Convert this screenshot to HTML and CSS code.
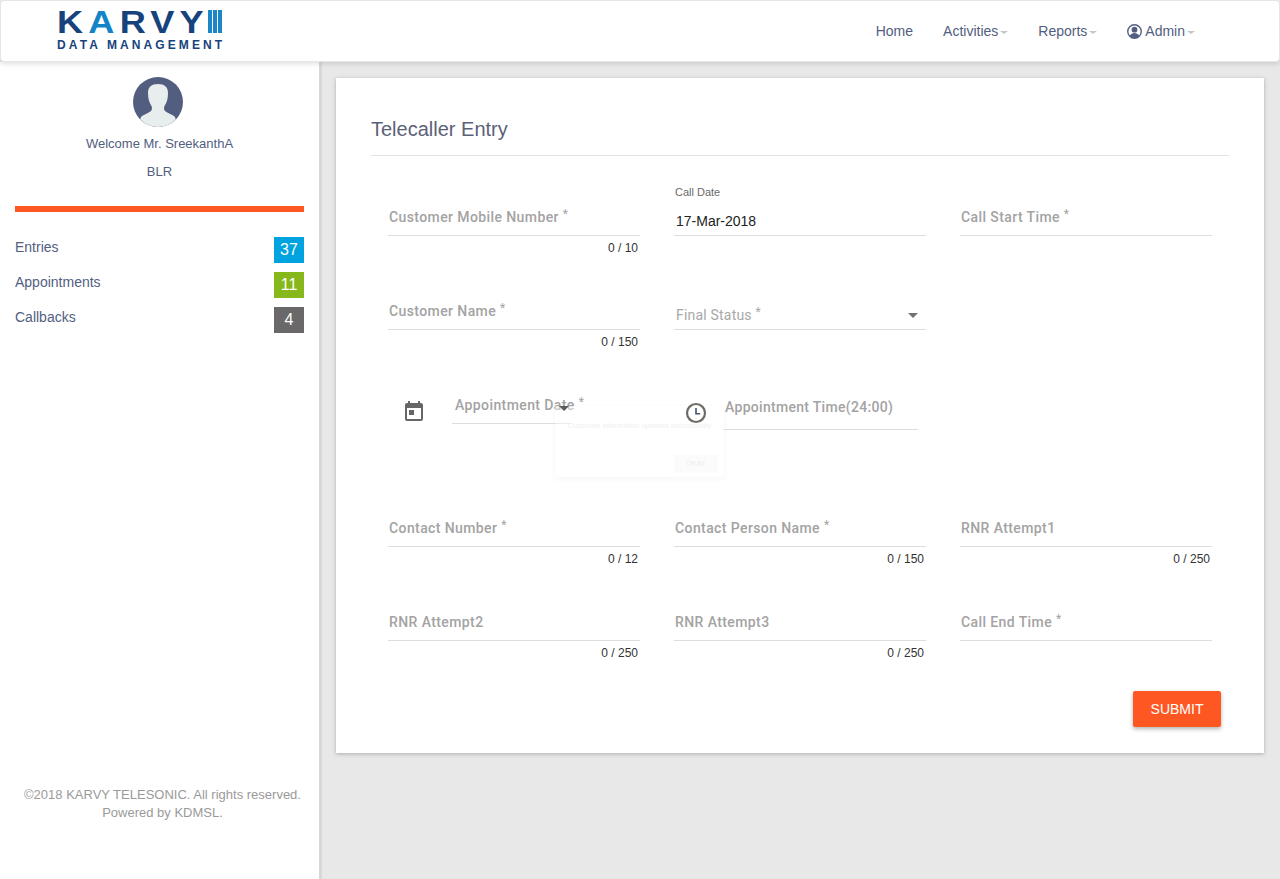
FILE: index.html
```html
<!DOCTYPE html>
<html lang="en">
<head>
    <meta charset="UTF-8">
    <title>Telecaller Entry</title>
    <link rel="stylesheet" href="styles.css">
</head>
<body>

    <header class="topbar">
        <div class="logo">
            <div class="logo-top">
                <span class="logo-word">K<span class="logo-a">A</span>RVY</span>
                <span class="logo-bars"><i></i><i></i><i></i></span>
            </div>
            <div class="logo-sub">DATA MANAGEMENT</div>
        </div>
        <nav class="nav">
            <a class="nav-item">Home</a>
            <a class="nav-item">Activities<span class="caret"></span></a>
            <a class="nav-item">Reports<span class="caret"></span></a>
            <a class="nav-item nav-admin">
                <svg class="user-icon" viewBox="0 0 24 24">
                    <circle cx="12" cy="12" r="10.800" fill="#fff" stroke="#525e80" stroke-width="2.200"/>
                    <circle cx="12" cy="9" r="4.600" fill="#525e80"/>
                    <path d="M4.500 19c1.500-3.500 4.500-4.800 7.500-4.800s6 1.300 7.500 4.800c-2 2.300-4.500 3.800-7.500 3.800S6.500 21.300 4.500 19z" fill="#525e80"/>
                </svg>
                Admin<span class="caret"></span>
            </a>
        </nav>
    </header>

    <div class="layout">
        <aside class="sidebar">
            <svg class="avatar" viewBox="0 0 50 50">
                <circle cx="25" cy="25" r="25" fill="#525e80"/>
                <path d="M25 7c-6.500 0-10 3-10 9 0 6 1.500 10 3.500 13 .8 1.500.5 4-.5 5-2 2-6 3-9 5 -1 1-1.500 2-1.800 3.500a25 25 0 0 0 35.600 0c-.3-1.500-.8-2.500-1.800-3.500-3-2-7-3-9-5-1-1-1.300-3.500-.5-5 2-3 3.500-7 3.500-13 0-6-3.500-9-10-9z" fill="#e8eded"/>
            </svg>
            <p class="welcome">Welcome Mr. SreekanthA</p>
            <p class="branch">BLR</p>
            <div class="divider"></div>
            <ul class="stats">
                <li><span>Entries</span><b class="badge badge-blue">37</b></li>
                <li><span>Appointments</span><b class="badge badge-green">11</b></li>
                <li><span>Callbacks</span><b class="badge badge-grey">4</b></li>
            </ul>
            <div class="copyright">
                <div>©2018 KARVY TELESONIC. All rights reserved.</div>
                <div>Powered by KDMSL.</div>
            </div>
        </aside>

        <main class="content">
            <section class="card">
                <h1 class="card-title">Telecaller Entry</h1>

                <div class="form-grid">
                    <div class="field">
                        <div class="field-box"><label>Customer Mobile Number <sup>*</sup></label></div>
                        <div class="hint">0 / 10</div>
                    </div>
                    <div class="field">
                        <div class="field-box field-filled">
                            <small>Call Date</small>
                            <span class="value">17-Mar-2018</span>
                        </div>
                    </div>
                    <div class="field">
                        <div class="field-box"><label>Call Start Time <sup>*</sup></label></div>
                    </div>

                    <div class="field">
                        <div class="field-box"><label>Customer Name <sup>*</sup></label></div>
                        <div class="hint">0 / 150</div>
                    </div>
                    <div class="field">
                        <div class="field-box field-select">
                            <span class="placeholder">Final Status <sup>*</sup></span>
                            <span class="select-arrow"></span>
                        </div>
                    </div>
                    <div class="field"></div>

                    <div class="appointment-row">
                        <svg class="icon-date" viewBox="0 0 24 24"><path d="M19 3h-1V1h-2v2H8V1H6v2H5c-1.110 0-1.990.9-1.990 2L3 19c0 1.100.89 2 2 2h14c1.100 0 2-.9 2-2V5c0-1.100-.9-2-2-2zm0 16H5V8h14v11zM7 10h5v5H7z"/></svg>
                        <div class="field-box date-box"><label>Appointment Date <sup>*</sup></label></div>
                        <svg class="icon-clock" viewBox="0 0 24 24">
                            <circle cx="12" cy="12" r="9.800" fill="#fff" stroke="#6e6a66" stroke-width="2.400"/>
                            <path d="M12 6.500V12.800H16.500" fill="none" stroke="#4a5578" stroke-width="1.800"/>
                        </svg>
                        <div class="field-box time-box"><label>Appointment Time(24:00)</label></div>

                        <!-- dialogue en train de disparaitre -->
                        <div class="toast">
                            <span class="toast-arrow"></span>
                            <p>Customer information updated successfully</p>
                            <span class="toast-btn">OKAY</span>
                        </div>
                    </div>

                    <div class="field">
                        <div class="field-box"><label>Contact Number <sup>*</sup></label></div>
                        <div class="hint">0 / 12</div>
                    </div>
                    <div class="field">
                        <div class="field-box"><label>Contact Person Name <sup>*</sup></label></div>
                        <div class="hint">0 / 150</div>
                    </div>
                    <div class="field">
                        <div class="field-box"><label>RNR Attempt1</label></div>
                        <div class="hint">0 / 250</div>
                    </div>

                    <div class="field">
                        <div class="field-box"><label>RNR Attempt2</label></div>
                        <div class="hint">0 / 250</div>
                    </div>
                    <div class="field">
                        <div class="field-box"><label>RNR Attempt3</label></div>
                        <div class="hint">0 / 250</div>
                    </div>
                    <div class="field">
                        <div class="field-box"><label>Call End Time <sup>*</sup></label></div>
                    </div>
                </div>

                <div class="actions">
                    <button class="submit">SUBMIT</button>
                </div>
            </section>
        </main>
    </div>

</body>
</html>
```

FILE: styles.css
```css
html, body {
    height: 100%;
}
body {
    margin: 0;
    height: 879px;
    overflow: hidden;
    display: flex;
    flex-direction: column;
    font-family: "Liberation Sans", Arial, sans-serif;
    font-size: 14px;
    color: #525e80;
    background-color: #e8e8e8;
}

/* barre du haut */
.topbar {
    position: relative;
    z-index: 2;
    flex: 0 0 62px;
    box-sizing: border-box;
    display: flex;
    justify-content: space-between;
    background-color: #fff;
    border: 1px solid #e6e6e6;
    border-radius: 4px;
    box-shadow: 0 2px 5px rgba(0, 0, 0, 0.12);
    padding: 0 84px 0 56px;
}
.logo {
    padding-top: 9px;
}
.logo-top {
    display: flex;
    height: 24px;
    align-items: flex-start;
}
.logo-word {
    width: 151px;
    font-size: 32px;
    font-weight: bold;
    line-height: 24px;
    letter-spacing: 4.6px;
    color: #17437c;
    transform: scaleX(1.13);
    transform-origin: left;
}
.logo-a {
    color: #1384c6;
}
.logo-bars {
    display: flex;
    gap: 1.5px;
}
.logo-bars i {
    width: 3.5px;
    height: 23px;
    background-color: #1b87c9;
}
.logo-sub {
    margin-top: 5px;
    font-size: 12px;
    line-height: 12px;
    font-weight: bold;
    letter-spacing: 3.1px;
    color: #17437c;
    white-space: nowrap;
}
.nav {
    display: flex;
    align-items: flex-start;
    gap: 30px;
    padding-top: 22px;
}
.nav-item {
    display: flex;
    align-items: center;
    line-height: 16px;
}
.caret {
    width: 0;
    height: 0;
    margin: 2px 0 0 2px;
    border-left: 4px solid transparent;
    border-right: 4px solid transparent;
    border-top: 3px solid #c6c6c6;
}
.user-icon {
    width: 15px;
    height: 15px;
    margin-right: 3px;
}

.layout {
    flex: 1;
    display: flex;
    min-height: 0;
}

/* colonne de gauche */
.sidebar {
    flex: 0 0 322px;
    box-sizing: border-box;
    display: flex;
    flex-direction: column;
    background-color: #fff;
    border-right: 3px solid #d8d8d8;
    padding: 15px 15px 0;
}
.avatar {
    width: 50px;
    height: 50px;
    align-self: center;
    flex: none;
    margin-right: 4px;
}
.welcome, .branch {
    margin: 0;
    text-align: center;
    font-size: 13px;
    line-height: 16px;
}
.welcome {
    margin-top: 9px;
}
.branch {
    margin-top: 12px;
}
.divider {
    height: 6px;
    margin-top: 26px;
    background-color: #ff5722;
    flex: none;
}
.stats {
    list-style: none;
    margin: 25px 0 0;
    padding: 0;
}
.stats li {
    display: flex;
    justify-content: space-between;
    align-items: flex-start;
    height: 26px;
    margin-bottom: 9px;
    line-height: 20px;
}
.badge {
    width: 30px;
    height: 26px;
    line-height: 26px;
    text-align: center;
    font-size: 16px;
    font-weight: normal;
    color: #fff;
}
.badge-blue { background-color: #00a3e0; }
.badge-green { background-color: #86b81b; }
.badge-grey { background-color: #6a6868; }

.copyright {
    margin-top: 444px;
    margin-left: 6px;
    text-align: center;
    font-size: 13px;
    line-height: 18px;
    color: #9a9a9a;
    white-space: nowrap;
}

/* contenu */
.content {
    flex: 1;
    padding: 16px 16px 0 14px;
    min-width: 0;
}
.card {
    box-sizing: border-box;
    height: 675px;
    padding: 28px 35px 0;
    background-color: #fff;
    box-shadow: 0 1px 4px rgba(0, 0, 0, 0.25);
}
.card-title {
    margin: 0;
    height: 49px;
    line-height: 46px;
    font-size: 20px;
    font-weight: normal;
    color: #5c6178;
    border-bottom: 1px solid #e2e2e2;
}
.form-grid {
    display: grid;
    grid-template-columns: repeat(3, 252px);
    grid-template-rows: 94px 94px 123px 94px 94px;
    column-gap: 34px;
    margin: 20px 0 0 17px;
}
.field-box {
    box-sizing: border-box;
    height: 60px;
    display: flex;
    flex-direction: column;
    justify-content: flex-end;
    padding: 0 1px 9px;
    border-bottom: 1px solid #dedede;
}
label {
    font-family: Roboto, sans-serif;
    font-size: 14px;
    font-weight: 500;
    letter-spacing: 0.4px;
    line-height: 18px;
    color: #a3a3a3;
    white-space: nowrap;
}
sup {
    font-size: 12px;
    line-height: 0;
    font-weight: normal;
    vertical-align: 4px;
}
.field-filled {
    padding: 0 2px 5px;
}
.field-filled small {
    font-size: 11px;
    line-height: 14px;
    color: #6a6a6a;
    margin-bottom: 13px;
    margin-left: -1px;
}
.value {
    font-size: 14px;
    line-height: 18px;
    color: #222;
}
.field-select {
    flex-direction: row;
    justify-content: space-between;
    align-items: center;
    height: 60px;
    padding: 36px 8px 5px 2px;
}
.placeholder {
    font-family: Roboto, sans-serif;
    font-size: 14px;
    color: #a8a8a8;
    letter-spacing: 0.2px;
}
.select-arrow {
    width: 0;
    height: 0;
    border-left: 5px solid transparent;
    border-right: 5px solid transparent;
    border-top: 5px solid #707070;
}
.hint {
    margin-top: 5px;
    padding-right: 2px;
    text-align: right;
    font-size: 12px;
    line-height: 14px;
    color: #333;
}

.appointment-row {
    grid-column: 1 / -1;
    position: relative;
    display: flex;
    align-items: flex-start;
}
.icon-date {
    width: 24px;
    height: 24px;
    margin: 36px 26px 0 14px;
    fill: #666;
    flex: none;
}
.date-box {
    width: 120px;
    flex: none;
    padding-left: 3px;
    padding-bottom: 9px;
}
.icon-clock {
    position: relative;
    z-index: 1;
    width: 22px;
    height: 22px;
    margin: 38px 16px 0 113px;
    flex: none;
}
.time-box {
    width: 195px;
    flex: none;
    height: 66px;
    padding-left: 2px;
    padding-bottom: 13px;
}
.time-box label {
    letter-spacing: 0.3px;
}
.toast {
    position: absolute;
    left: 167px;
    top: 42px;
    width: 169px;
    height: 71px;
    box-sizing: border-box;
    background-color: rgba(255, 255, 255, 0.4);
    box-shadow: 0 2px 6px rgba(0, 0, 0, 0.04);
}
.toast-arrow {
    position: absolute;
    left: 4px;
    top: 0;
    width: 0;
    height: 0;
    border-left: 5px solid transparent;
    border-right: 5px solid transparent;
    border-top: 5px solid #5a5a5a;
}
.toast p {
    margin: 0;
    padding-top: 14px;
    text-align: center;
    font-size: 7.5px;
    line-height: 12px;
    color: #f0f0f0;
    white-space: nowrap;
}
.toast-btn {
    position: absolute;
    right: 6px;
    bottom: 4px;
    width: 44px;
    height: 18px;
    line-height: 18px;
    text-align: center;
    font-size: 7px;
    color: #eee;
    background-color: #fbfbfb;
}

.actions {
    display: flex;
    justify-content: flex-end;
    padding: 16px 8px 0 0;
}
.submit {
    width: 88px;
    height: 36px;
    border: none;
    border-radius: 2px;
    font-family: "Liberation Sans", Arial, sans-serif;
    font-size: 14px;
    color: #fff;
    background-color: #ff5722;
    box-shadow: 0 2px 4px rgba(0, 0, 0, 0.3);
}
```
